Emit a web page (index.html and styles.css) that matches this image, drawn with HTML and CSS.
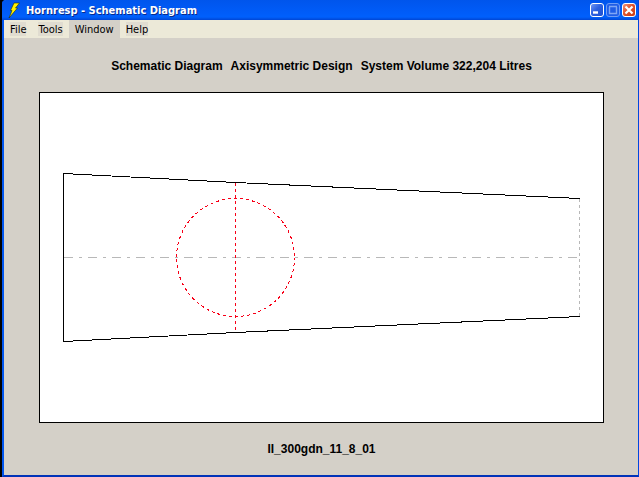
FILE: index.html
```
<!DOCTYPE html>
<html lang="en">
<head>
  <meta charset="UTF-8">
  <meta name="viewport" content="width=device-width, initial-scale=1">
  <title>Hornresp - Schematic Diagram</title>
  <link rel="stylesheet" href="styles.css">
</head>
<body>
  <div class="window">
    <header class="titlebar">
      <svg class="app-icon" width="16" height="16" viewBox="0 0 16 16" aria-hidden="true">
        <path d="M8 1H13.500L9.500 6H11.500L3 16L6 8.500H4.500Z" fill="#fff200" stroke="#1c2a10" stroke-width="0.6"/>
      </svg>
      <h1 class="title">Hornresp - Schematic Diagram</h1>
      <div class="controls">
        <button class="control" aria-label="Minimize">
          <svg width="14" height="14" viewBox="0 0 14 14"><path d="M3 9.5H8" stroke="#fff" stroke-width="2.4"/></svg>
        </button>
        <button class="control maximize" aria-label="Maximize" disabled>
          <svg width="14" height="14" viewBox="0 0 14 14"><path d="M3.5 4V10.5H10.5V4M3 3.5H11" fill="none" stroke="#7fa6f5" stroke-width="1.4"/></svg>
        </button>
        <button class="control close" aria-label="Close">
          <svg width="14" height="14" viewBox="0 0 14 14"><path d="M3.5 3.5L10.5 10.5M10.5 3.5L3.5 10.5" stroke="#fff" stroke-width="2.2"/></svg>
        </button>
      </div>
    </header>

    <nav class="menubar">
      <button class="menu"><span>File</span></button>
      <button class="menu"><span>Tools</span></button>
      <button class="menu active"><span>Window</span></button>
      <button class="menu"><span>Help</span></button>
    </nav>

    <main class="client">
      <div class="caption">
        <span>Schematic Diagram</span>
        <span>Axisymmetric Design</span>
        <span>System Volume 322,204 Litres</span>
      </div>

      <svg class="schematic" viewBox="0 0 565 331" role="img" aria-label="Horn schematic">
        <rect x="0.5" y="0.5" width="564" height="330" fill="#fff" stroke="#000"/>
        <!-- axis and mouth -->
        <path class="axis" d="M25 165.5H540"/>
        <path class="mouth" d="M540.5 107V225"/>
        <!-- driver -->
        <circle class="driver" cx="196.5" cy="165.5" r="59"/>
        <path class="driver" d="M196.5 91V240"/>
        <!-- horn walls -->
        <path class="wall" d="M541 106.5L196.5 90.5L24.5 81.5V249.5L196.5 240.5L541 224.5"/>
      </svg>

      <p class="record">II_300gdn_11_8_01</p>
    </main>
  </div>
</body>
</html>
```
FILE: styles.css
```
:root {
  --face: #d4d0c8;
  --menu: #ece9d8;
  --frame: #0047e0;
}

* {
  box-sizing: border-box;
}

body {
  margin: 0;
  padding-left: 2px;
  background: #000;
  color: #000;
}

.window {
  display: flex;
  flex-direction: column;
  min-height: 100vh;
  border: solid var(--frame);
  border-width: 0 1px 2px 2px;
  border-bottom-color: #0033b8;
  border-left-color: #0055ee;
  border-top-left-radius: 4px;
  background: var(--face);
}

.titlebar {
  display: flex;
  align-items: center;
  height: 20px;
  margin-left: -2px;
  padding: 0 2px 0 4px;
  border-top-left-radius: 4px;
  background: linear-gradient(#0055ec, #005cf8 60%, #0060fc 85%, #0046d4);
}

.app-icon {
  flex: none;
}

.title {
  flex: 1;
  margin: 0 0 0 4px;
  padding-top: 2px;
  font: bold 11px/18px "DejaVu Sans Condensed", "Open Sans", sans-serif;
  color: #fff;
  text-shadow: 1px 1px #0a2a8a;
  white-space: nowrap;
}

.controls {
  display: flex;
  gap: 2px;
}

.control {
  display: flex;
  align-items: center;
  justify-content: center;
  width: 14px;
  height: 14px;
  padding: 0;
  border: 1px solid #fff;
  border-radius: 3px;
  background: linear-gradient(135deg, #6f97f4, #2c60e0 45%, #1c4fd0);
}

.control svg {
  flex: none;
}

.maximize {
  border-color: #6f9cf5;
  background: #1f5de6;
}

.close {
  background: linear-gradient(135deg, #f0947a, #e0532c 45%, #c83a10);
}

.menubar {
  display: flex;
  height: 18px;
  background: var(--menu);
}

.menu {
  padding: 0 6px;
  border: 0;
  background: none;
  color: #000;
  font: 11px/18px "DejaVu Sans Condensed", "Noto Sans", sans-serif;
}

.menu span {
  display: block;
  height: 14px;
  line-height: 16px;
  background: #e0dcd0;
}

.active,
.active span {
  background: var(--face);
}

.client {
  flex: 1;
  padding: 20px 34px 0 35px;
  font: bold 12px/16px "Liberation Sans", Arial, sans-serif;
}

.caption {
  display: flex;
  justify-content: center;
  gap: 8px;
  margin-bottom: 18px;
  white-space: nowrap;
}

.schematic {
  display: block;
  width: 100%;
  shape-rendering: crispEdges;
}

.wall,
.axis,
.mouth,
.driver {
  fill: none;
  stroke: #000;
}

.axis {
  stroke: #b8b8b8;
  stroke-dasharray: 9 6 3 6;
}

.mouth {
  stroke: #b8b8b8;
  stroke-dasharray: 3 3;
}

.driver {
  stroke: #f80018;
  stroke-dasharray: 3 3;
}

.record {
  margin: 18px 0 0;
  text-align: center;
}
```
